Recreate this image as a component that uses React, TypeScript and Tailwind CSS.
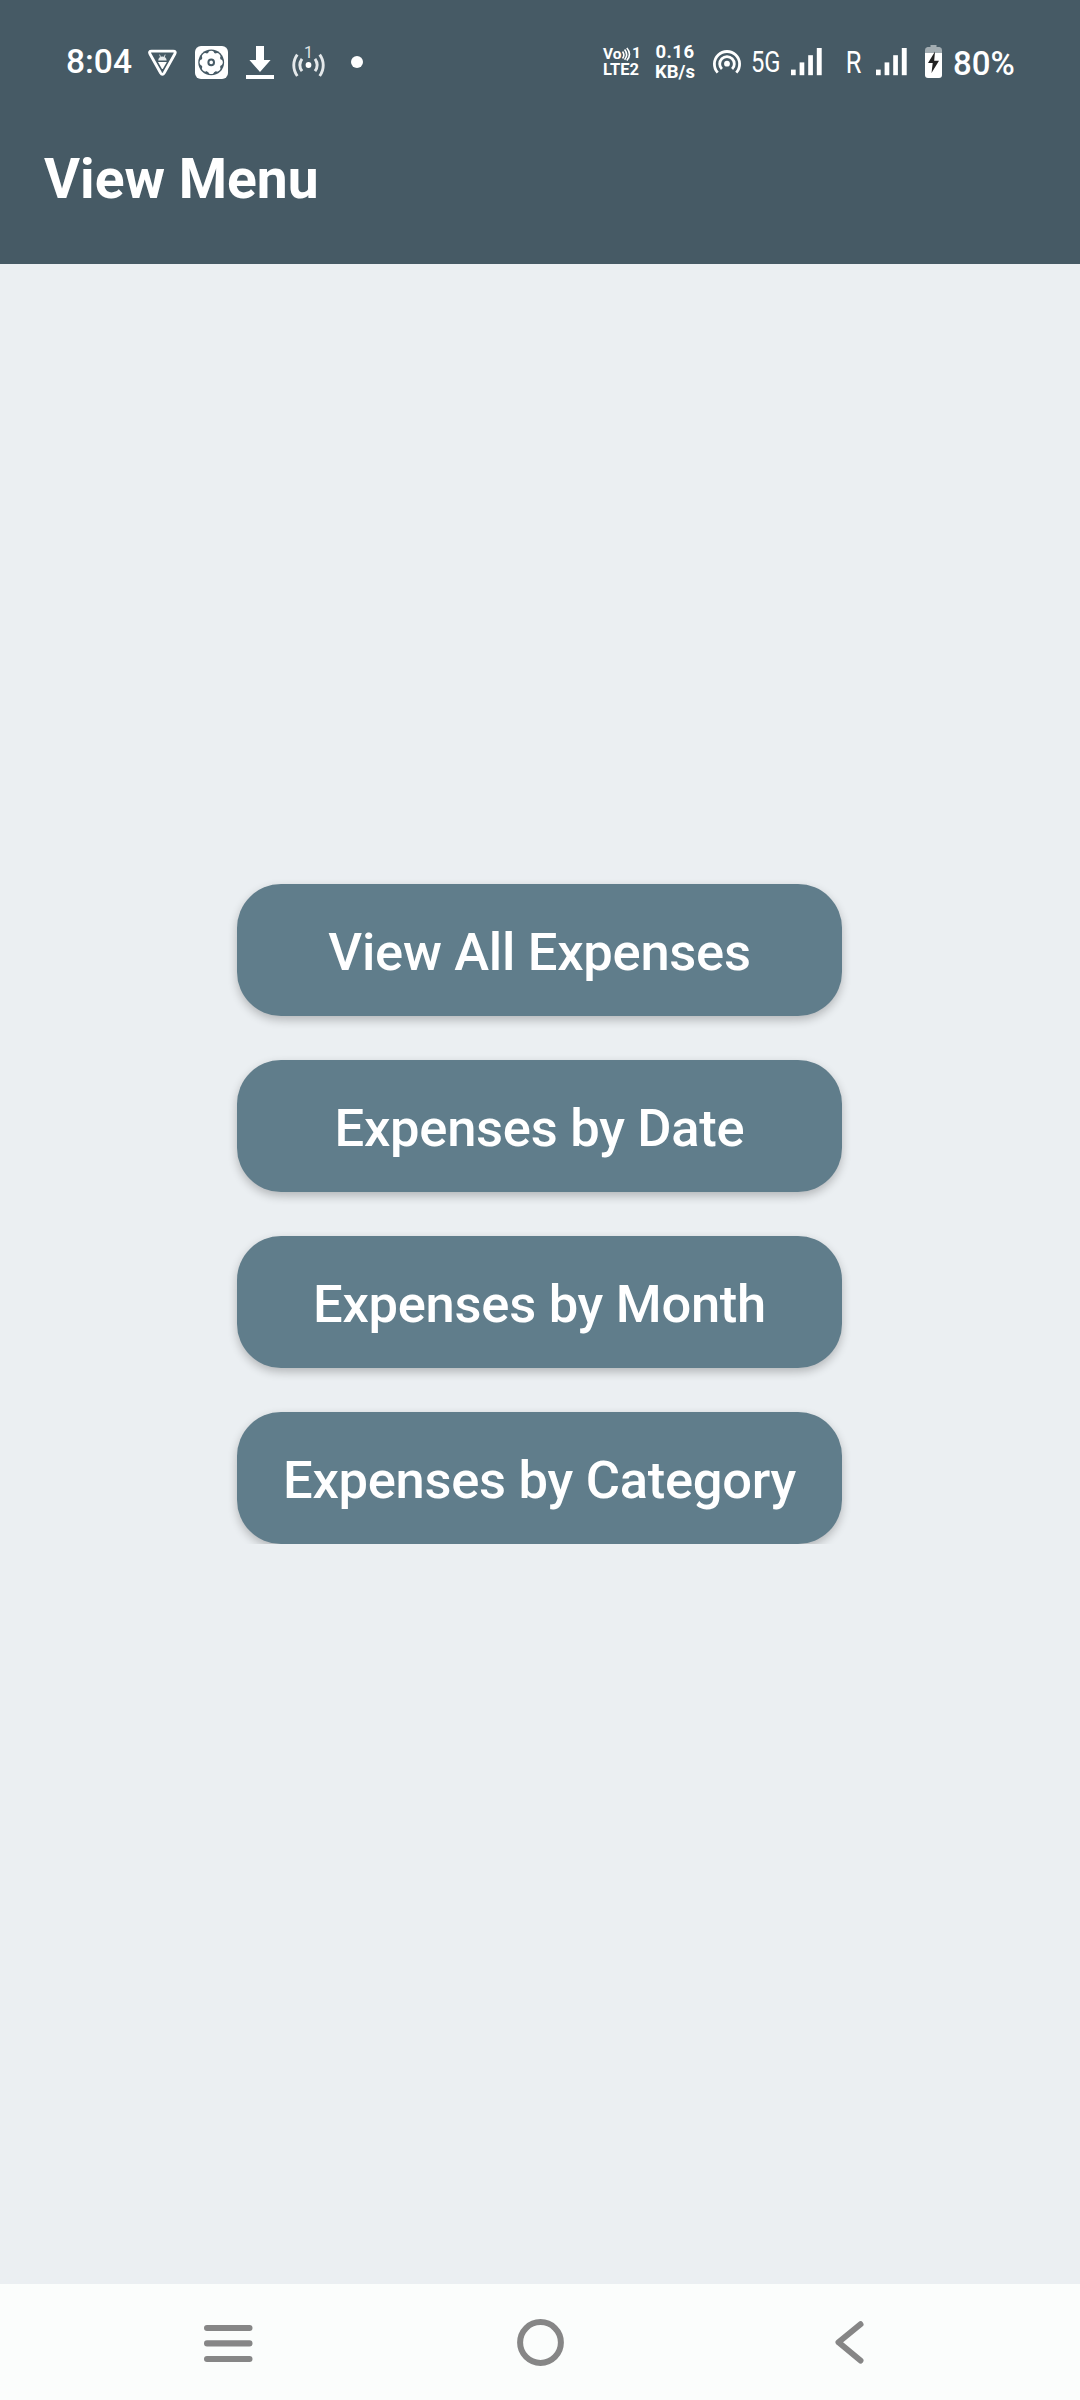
import React from "react";

const BUTTONS = [
  "View All Expenses",
  "Expenses by Date",
  "Expenses by Month",
  "Expenses by Category",
];

const GEAR_TEETH = [0, 45, 90, 135, 180, 225, 270, 315];

function ShieldIcon() {
  return (
    <svg className="ml-[16px] h-11 w-[32px] shrink-0" viewBox="0 0 32 44" fill="none">
      <path
        d="M4.6 11.2H26.2Q29.4 11.2 27.8 14L17.3 32.8Q15.4 36 13.5 32.8L3 14Q1.4 11.2 4.6 11.2Z"
        stroke="#fff"
        strokeWidth="2.8"
      />
      <path d="M11.2 20.4C11.3 18 13 16.4 15.4 16.4S19.5 18 19.6 20.4Z" fill="#e6eaec" />
      <path d="M12.6 14.6L13.5 17M18.2 14.6L17.3 17" stroke="#cfd6d9" strokeWidth="1" />
      <path d="M11 22H19.8L16.1 28.4Q15.4 29.4 14.7 28.4Z" fill="#fff" />
    </svg>
  );
}

function GearIcon() {
  return (
    <svg className="ml-[16px] h-11 w-[33px] shrink-0" viewBox="0 0 33 44" fill="none">
      <rect x="0" y="6" width="33" height="33" rx="6" fill="#fff" />
      <circle cx="16.2" cy="22.4" r="12.9" fill="#465a65" />
      <circle cx="16.2" cy="22.4" r="10" fill="#fff" />
      {GEAR_TEETH.map((angle) => (
        <circle key={angle} cx="16.2" cy="13.9" r="3.1" fill="#fff" transform={`rotate(${angle} 16.2 22.4)`} />
      ))}
      <circle cx="16.2" cy="22.4" r="2.8" stroke="#465a65" strokeWidth="2" />
    </svg>
  );
}

function DownloadIcon() {
  return (
    <svg className="ml-[18px] h-11 w-[28px] shrink-0" viewBox="0 0 28 44" fill="#fff">
      <path d="M10 6H18V20H24.6L14 32L3.4 20H10Z" />
      <rect x="0" y="35" width="28" height="4" />
    </svg>
  );
}

function BroadcastIcon() {
  return (
    <div className="relative ml-[18px] h-11 w-[33px] shrink-0">
      <svg className="h-11 w-[33px]" viewBox="0 0 33 44" fill="none">
        <g stroke="#e4e8ea" strokeWidth="2.9">
          <path d="M5.3 14.6A18 18 0 0 0 5.3 36" />
          <path d="M27.7 14.6A18 18 0 0 1 27.7 36" />
          <path d="M10 18.8A10.8 10.8 0 0 0 10 31.2" />
          <path d="M23 18.8A10.8 10.8 0 0 1 23 31.2" />
        </g>
        <circle cx="16.5" cy="25" r="2.9" fill="#fff" />
      </svg>
      <span className="absolute top-[5px] left-[12px] text-[16px] leading-[16px] text-[#dfe4e6]">1</span>
    </div>
  );
}

function VolteIcon() {
  return (
    <div className="h-11 w-[38px] shrink-0 pt-[6px] font-bold">
      <div className="flex h-4 items-start">
        <span className="w-[19px] text-[15.5px] leading-[17px]">Vo</span>
        <svg className="h-4 w-[10px]" viewBox="0 0 10 16" fill="none" stroke="#fff" strokeWidth="1.6">
          <path d="M0.5 5.5Q3.2 9 0.5 12.5" />
          <path d="M2.6 3.5Q6.6 8.5 2.6 13.8" />
          <path d="M4.8 2Q10.2 8 4.8 14.6" />
        </svg>
        <span className="text-[15.5px] leading-[15px]">1</span>
      </div>
      <div className="text-[16.5px] leading-[16px] whitespace-nowrap">LTE2</div>
    </div>
  );
}

function HotspotIcon() {
  return (
    <svg className="ml-[17px] h-11 w-[30px] shrink-0" viewBox="0 0 30 44" fill="none">
      <g stroke="#fff" strokeWidth="2.8">
        <path d="M5.7 32.6A12.6 12.6 0 1 1 24.3 32.6" />
        <path d="M9.9 29.1A7.3 7.3 0 1 1 20.1 29.1" />
      </g>
      <circle cx="15" cy="23.7" r="2.9" fill="#fff" />
    </svg>
  );
}

function SignalIcon() {
  return (
    <svg className="h-11 w-[31px] shrink-0" viewBox="0 0 31 44" fill="#fff">
      <rect x="0" y="29.6" width="4.7" height="5.6" />
      <rect x="8.6" y="22.4" width="4.7" height="12.8" />
      <rect x="17.2" y="15.2" width="4.7" height="20" />
      <rect x="25.8" y="8" width="4.9" height="27.2" />
    </svg>
  );
}

function BatteryIcon() {
  return (
    <svg className="ml-[18px] h-11 w-[17px] shrink-0" viewBox="0 0 17 44">
      <path d="M5.5 5H11.5V7H14.5Q17 7.5 17 10V13.5H0V10Q0 7.5 2.5 7H5.5Z" fill="#a3adb2" />
      <path d="M0 13H17V35Q17 38 14 38H3Q0 38 0 35Z" fill="#fff" />
      <path d="M10 11.5L3 23H7.7L6.5 33L14 20.7H9.2Z" fill="#222" />
    </svg>
  );
}

function StatusBar() {
  return (
    <div className="flex h-[124px] justify-between pt-10 pr-[64px] pl-[66px]">
      <div className="flex items-start">
        <span className="w-[65px] text-[33.5px] leading-[43px] font-medium whitespace-nowrap">8:04</span>
        <ShieldIcon />
        <GearIcon />
        <DownloadIcon />
        <BroadcastIcon />
        <span className="mt-4 ml-[26px] size-3 rounded-full bg-white" />
      </div>
      <div className="flex items-start">
        <VolteIcon />
        <div className="ml-[14px] flex w-10 flex-col pt-[2px] text-center text-[18.5px] leading-5 font-bold">
          <span className="tracking-[0.4px]">0.16</span>
          <span>KB/s</span>
        </div>
        <HotspotIcon />
        <span className="ml-[9px] w-[40px] origin-left scale-x-[.82] text-[29px] leading-[44px]">5G</span>
        <SignalIcon />
        <span className="ml-[23px] w-[31px] origin-left scale-x-[.82] pl-px text-[31px] leading-[45px]">R</span>
        <SignalIcon />
        <BatteryIcon />
        <span className="ml-[11px] w-[63px] text-[33px] leading-[47px] font-medium whitespace-nowrap">80%</span>
      </div>
    </div>
  );
}

export default function App() {
  return (
    <div className="flex h-[2400px] w-[1080px] flex-col overflow-hidden bg-[#ebeff2] font-[Roboto,sans-serif]">
      <header className="h-[264px] shrink-0 bg-[#465a65] text-white">
        <StatusBar />
        <h1 className="pl-[44px] text-[55.2px] leading-[110px] font-bold">View Menu</h1>
      </header>

      <main className="flex flex-1 flex-col items-center pt-[580px] pr-px">
        <div className="-mt-10 flex w-[685px] flex-col gap-11 overflow-hidden px-10 pt-20">
          {BUTTONS.map((label) => (
            <button
              key={label}
              className="h-[132px] w-[605px] shrink-0 rounded-[44px] bg-[#607d8b] pt-[3px] text-[52.5px] leading-[62px] font-medium tracking-[-0.28px] whitespace-nowrap text-white shadow-[0_4px_10px_rgba(0,0,0,0.24)]"
            >
              {label}
            </button>
          ))}
        </div>
      </main>

      <nav className="flex h-[116px] shrink-0 items-start bg-[#fbfdfc] pt-[29px]">
        <svg className="ml-[204px] h-[60px] w-[49px]" viewBox="0 0 49 60" fill="#868686">
          <rect x="0" y="12" width="48.5" height="6" rx="3" />
          <rect x="0" y="27.3" width="48.5" height="6.2" rx="3" />
          <rect x="0" y="43" width="48.5" height="6" rx="3" />
        </svg>
        <svg className="ml-[262px] h-[60px] w-[50px]" viewBox="0 0 50 60" fill="none">
          <circle cx="25.5" cy="29.5" r="20.4" stroke="#868686" strokeWidth="6" />
        </svg>
        <svg className="ml-[267px] h-[60px] w-[34px]" viewBox="0 0 34 60" fill="none">
          <path
            d="M28.5 11.3L6.5 29.3L28.5 47.5"
            stroke="#868686"
            strokeWidth="6"
            strokeLinecap="round"
            strokeLinejoin="round"
          />
        </svg>
      </nav>
    </div>
  );
}
